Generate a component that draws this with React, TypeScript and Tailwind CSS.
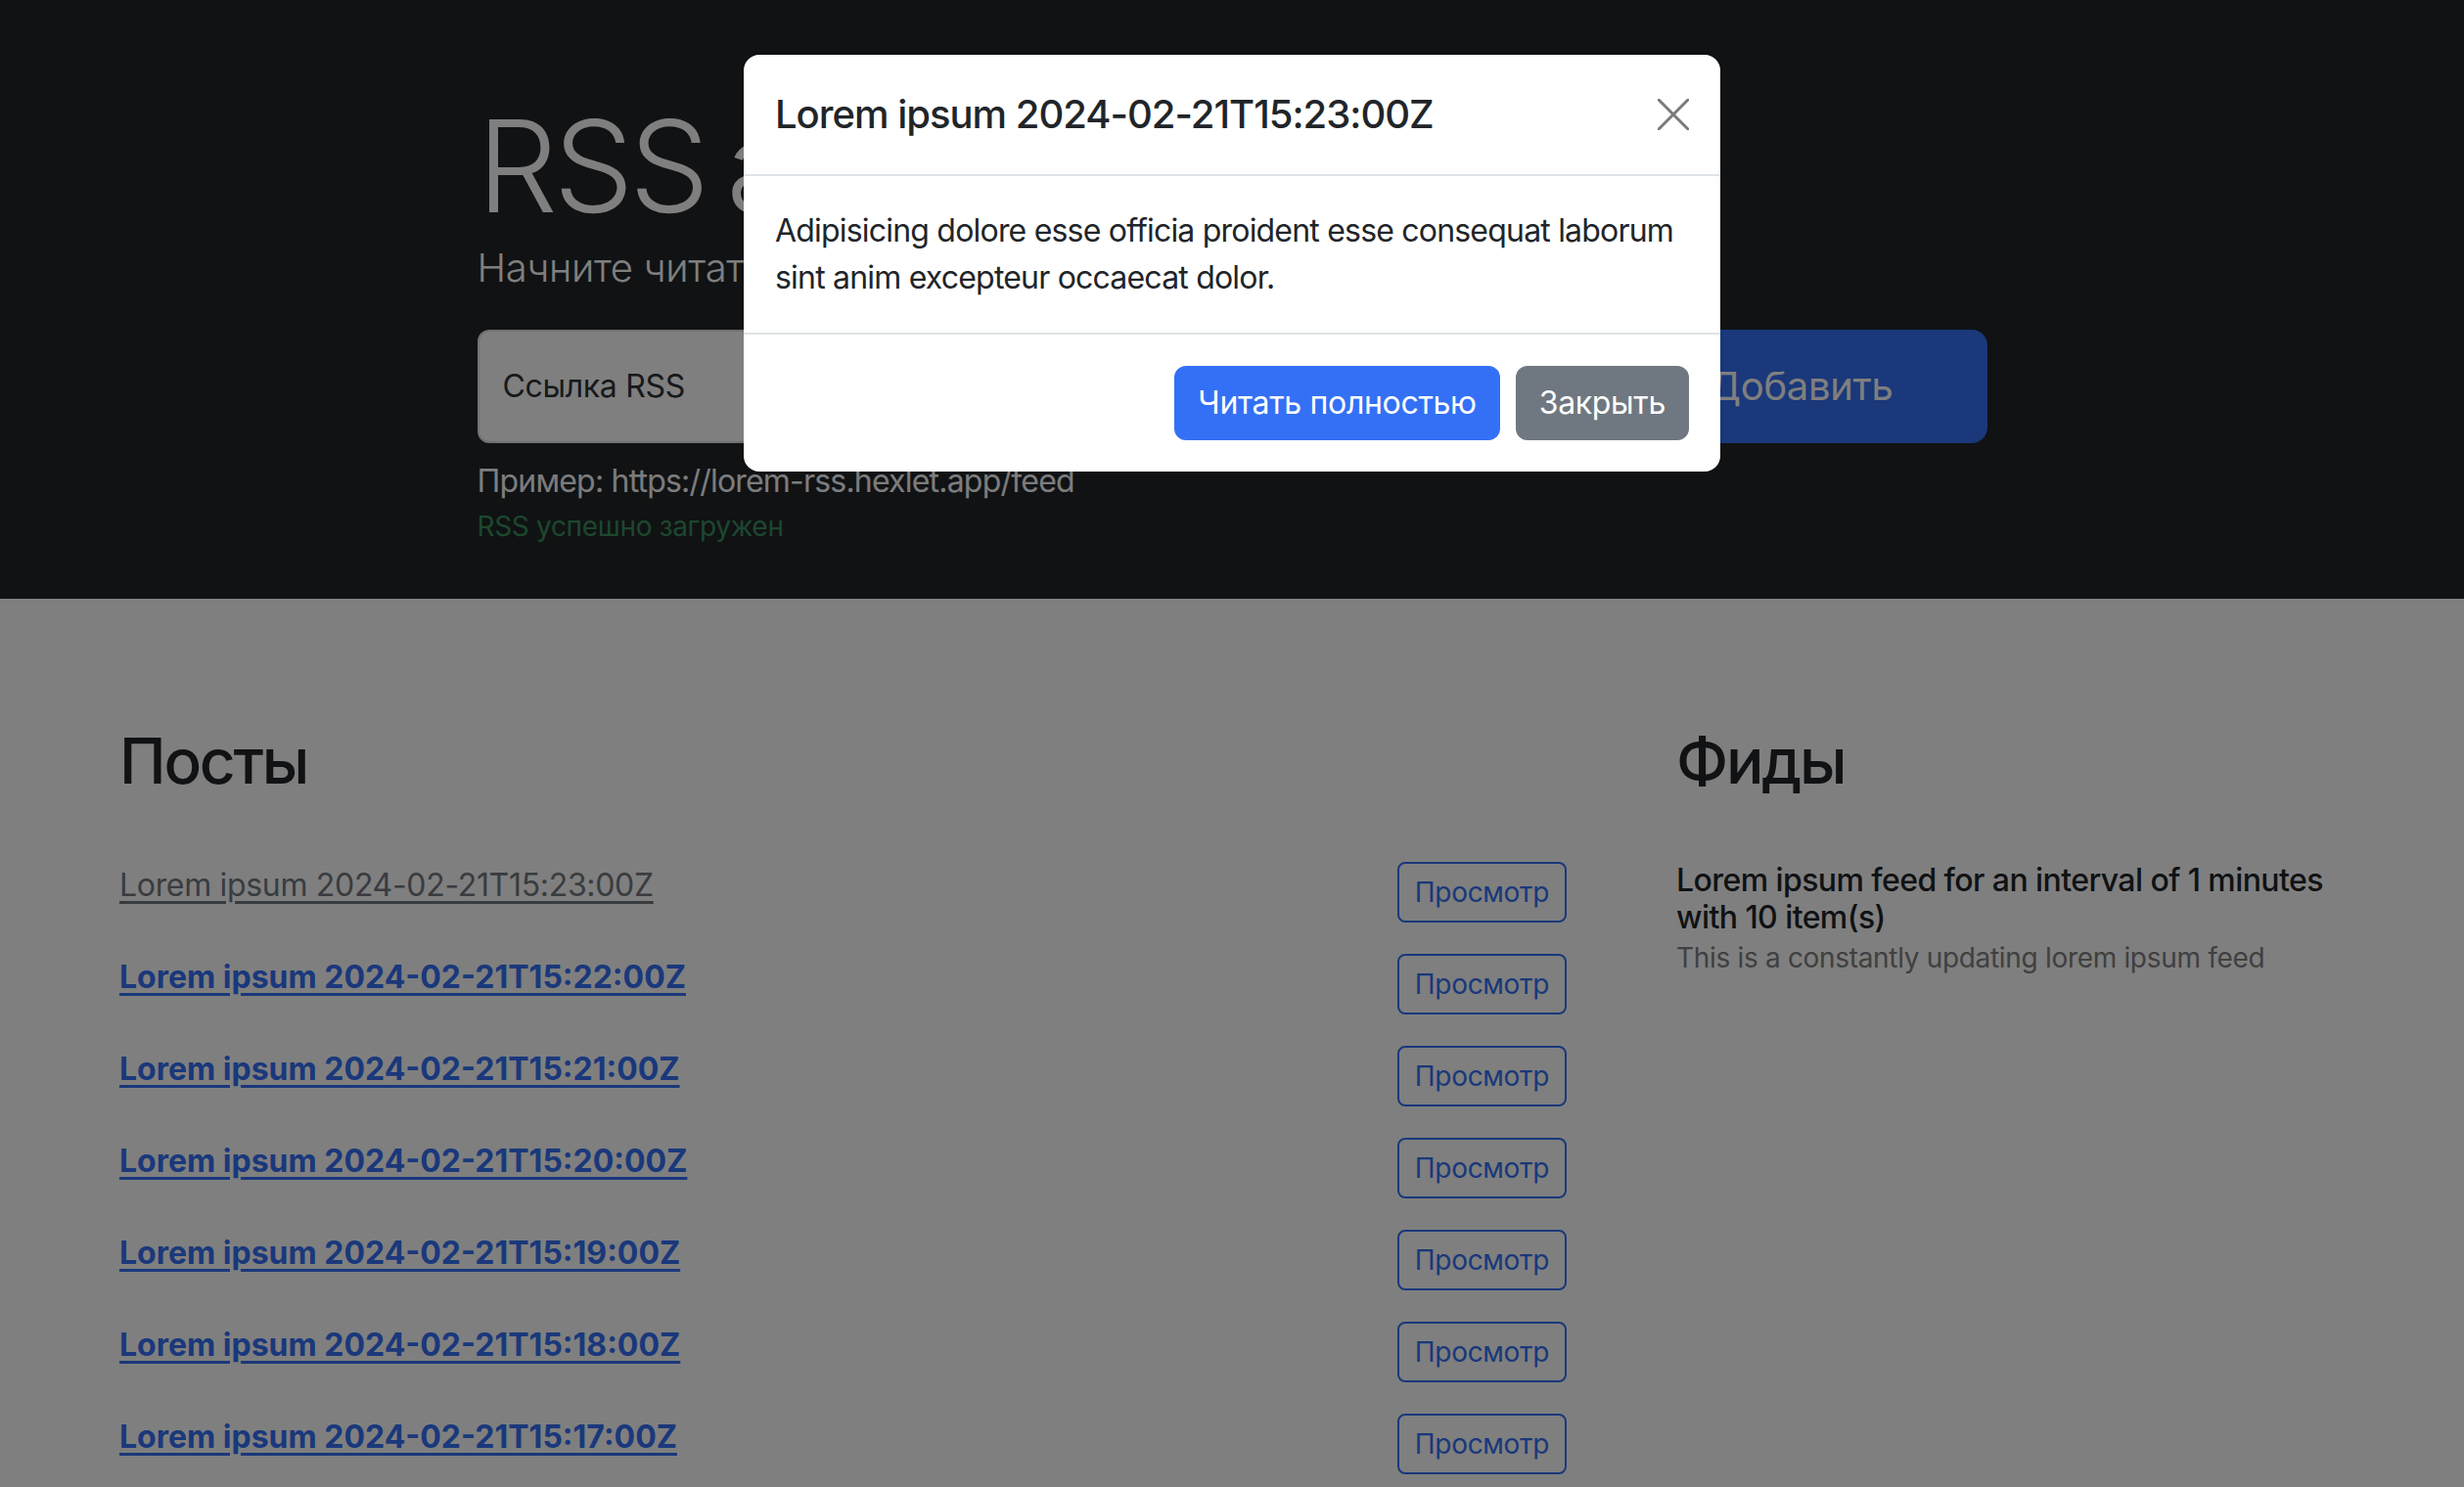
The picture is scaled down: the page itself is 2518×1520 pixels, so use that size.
type Post = {
  id: number;
  title: string;
  visited: boolean;
};

const posts: Post[] = [
  { id: 1, title: "Lorem ipsum 2024-02-21T15:23:00Z", visited: true },
  { id: 2, title: "Lorem ipsum 2024-02-21T15:22:00Z", visited: false },
  { id: 3, title: "Lorem ipsum 2024-02-21T15:21:00Z", visited: false },
  { id: 4, title: "Lorem ipsum 2024-02-21T15:20:00Z", visited: false },
  { id: 5, title: "Lorem ipsum 2024-02-21T15:19:00Z", visited: false },
  { id: 6, title: "Lorem ipsum 2024-02-21T15:18:00Z", visited: false },
  { id: 7, title: "Lorem ipsum 2024-02-21T15:17:00Z", visited: false },
  { id: 8, title: "Lorem ipsum 2024-02-21T15:16:00Z", visited: false },
  { id: 9, title: "Lorem ipsum 2024-02-21T15:15:00Z", visited: false },
  { id: 10, title: "Lorem ipsum 2024-02-21T15:14:00Z", visited: false },
];

export default function App() {
  return (
    <div className="relative h-[1520px] overflow-hidden bg-white font-['Inter','Noto_Sans',sans-serif] tracking-[-0.02em] text-[#212529]">
      {/* header with the form */}
      <section className="h-[612px] bg-[#212529]">
        <div className="mx-auto w-[1543px] pt-[98px] text-white">
          <h1 className="mb-[2px] text-[130px] font-light leading-[144px] tracking-[-0.035em] [word-spacing:-0.08em]">
            RSS агрегатор
          </h1>
          <p className="text-[40px] font-light leading-[60px]">
            Начните читать RSS сегодня! Это легко, это красиво.
          </p>

          <form className="mt-[33px] flex gap-[16px]">
            <div className="flex h-[116px] flex-1 items-center rounded-[12px] border-2 border-[#dee2e6] bg-white px-[24px]">
              <span className="text-[32px] leading-[48px] text-[#2e3236]">
                Ссылка RSS
              </span>
            </div>
            <button
              type="button"
              className="h-[116px] rounded-[16px] bg-[#3470f5] px-[96px] text-[40px] leading-[60px] text-white"
            >
              Добавить
            </button>
          </form>

          <p className="mt-[15px] text-[32px] leading-[48px] tracking-[-0.025em] text-[#f8f9fa]">
            Пример: https://lorem-rss.hexlet.app/feed
          </p>
          <p className="mt-[1px] text-[28px] leading-[42px] text-[#3b8f5c]">
            RSS успешно загружен
          </p>
        </div>
      </section>

      {/* posts and feeds */}
      <section className="flex pt-[96px]">
        <div className="ml-[90px] w-[1543px]">
          <div className="p-[32px]">
            <h2 className="mb-[16px] text-[64px] font-medium leading-[76.8px] tracking-[-0.035em]">
              Посты
            </h2>
          </div>
          <ul>
            {posts.map((post) => (
              <li
                key={post.id}
                className="flex h-[94px] items-start justify-between px-[32px] py-[16px]"
              >
                <a
                  href="#"
                  className={
                    post.visited
                      ? "text-[32px] leading-[48px] font-normal text-[#72787f] underline underline-offset-[5px]"
                      : "text-[32px] leading-[48px] font-bold tracking-normal text-[#3571f6] underline underline-offset-[5px]"
                  }
                >
                  {post.title}
                </a>
                <button
                  type="button"
                  className="h-[62px] rounded-[8px] border-2 border-[#3470f5] px-[16px] text-[28px] leading-[42px] text-[#3470f5]"
                >
                  Просмотр
                </button>
              </li>
            ))}
          </ul>
        </div>

        <div className="ml-[48px] w-[744px]">
          <div className="p-[32px]">
            <h2 className="mb-[16px] text-[64px] font-medium leading-[76.8px] tracking-[-0.035em]">
              Фиды
            </h2>
          </div>
          <ul>
            <li className="px-[32px] pt-[16px] pb-[16px]">
              <h3 className="text-[32px] font-medium leading-[38.4px] tracking-[-0.018em]">
                Lorem ipsum feed for an interval of 1 minutes with 10 item(s)
              </h3>
              <p className="text-[28px] leading-[42px] text-[#808080]">
                This is a constantly updating lorem ipsum feed
              </p>
            </li>
          </ul>
        </div>
      </section>

      {/* modal backdrop */}
      <div className="fixed inset-0 flex justify-center bg-black/50 pt-[56px]">
        <div className="h-fit w-[998px] rounded-[16px] bg-white">
          <div className="flex h-[124px] items-center justify-between border-b-2 border-[#dee2e6] px-[32px]">
            <h5 className="text-[40px] font-medium leading-[48px] tracking-[-0.025em]">
              Lorem ipsum 2024-02-21T15:23:00Z
            </h5>
            <button type="button" className="flex h-[32px] w-[32px] items-center justify-center">
              <svg width="32" height="32" viewBox="0 0 32 32">
                <path
                  d="M1 1L31 31M31 1L1 31"
                  stroke="#7a7a7a"
                  strokeWidth="3"
                  strokeLinecap="square"
                />
              </svg>
            </button>
          </div>
          <div className="px-[32px] py-[32px] text-[32px] leading-[48px] tracking-[-0.025em]">
            Adipisicing dolore esse officia proident esse consequat laborum sint anim excepteur occaecat dolor.
          </div>
          <div className="flex justify-end gap-[16px] border-t-2 border-[#dee2e6] p-[32px]">
            <button
              type="button"
              className="h-[76px] rounded-[12px] bg-[#3470f5] px-[24px] text-[32px] leading-[48px] text-white"
            >
              Читать полностью
            </button>
            <button
              type="button"
              className="h-[76px] rounded-[12px] bg-[#6f7780] px-[24px] text-[32px] leading-[48px] text-white"
            >
              Закрыть
            </button>
          </div>
        </div>
      </div>
    </div>
  );
}
